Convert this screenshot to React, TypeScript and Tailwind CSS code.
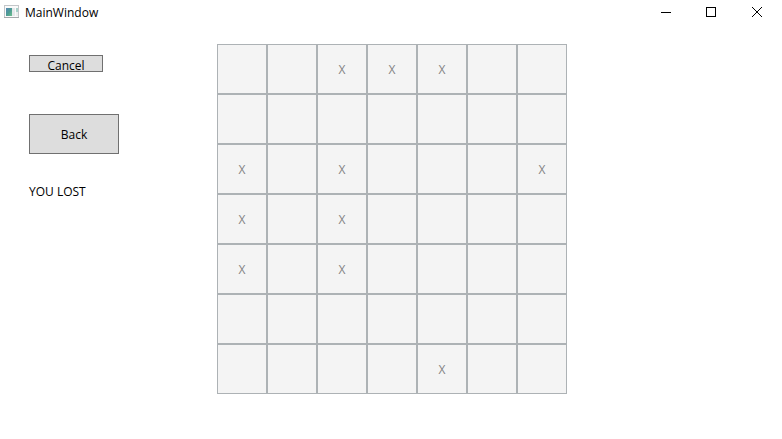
import React from "react";

const SIZE = 7;

const marks = new Set([
  "0-2", "0-3", "0-4",
  "2-0", "2-2", "2-6",
  "3-0", "3-2",
  "4-0", "4-2",
  "6-4",
]);

function AppIcon() {
  return (
    <svg width="16" height="14" viewBox="0 0 16 14" aria-hidden="true" shapeRendering="crispEdges">
      <defs>
        <linearGradient id="pane" x1="0" y1="0" x2="1" y2="1">
          <stop offset="0" stopColor="#5586b4" />
          <stop offset="0.5" stopColor="#4c9a94" />
          <stop offset="1" stopColor="#6fc08c" />
        </linearGradient>
      </defs>
      <rect x="0.5" y="0.5" width="14" height="12" fill="#fafafa" stroke="#c3c6c9" />
      <rect x="0" y="12" width="15" height="1" fill="#a4a7aa" />
      <rect x="2" y="3" width="6" height="8" fill="url(#pane)" />
      <rect x="8" y="3" width="3" height="8" fill="#e4e8ea" />
      <rect x="12" y="3" width="2" height="4" fill="#a9d2cb" />
      <rect x="12" y="7" width="2" height="4" fill="#eceeee" />
    </svg>
  );
}

function CaptionButton({ label, children }: { label: string; children: React.ReactNode }) {
  return (
    <button type="button" aria-label={label} className="flex h-6 w-[46px] items-center justify-center">
      <svg width="12" height="12" viewBox="0 0 12 12" fill="none" stroke="#000" aria-hidden="true">
        {children}
      </svg>
    </button>
  );
}

function TitleBar() {
  return (
    <header className="flex h-6 items-center justify-between pr-0.5 pl-1">
      <div className="flex items-center gap-[5px]">
        <AppIcon />
        <h1 className="pt-0.5 text-[12px] leading-4">MainWindow</h1>
      </div>
      <div className="flex">
        <CaptionButton label="Minimize">
          <path d="M2 6.5h10" shapeRendering="crispEdges" />
        </CaptionButton>
        <CaptionButton label="Maximize">
          <path d="M1.5 1.5h9v9h-9z" shapeRendering="crispEdges" />
        </CaptionButton>
        <CaptionButton label="Close">
          <path d="M1 1l10 10M11 1L1 11" />
        </CaptionButton>
      </div>
    </header>
  );
}

function Board() {
  return (
    <div className="grid shrink-0 grid-cols-7">
      {Array.from({ length: SIZE * SIZE }, (_, i) => {
        const row = Math.floor(i / SIZE);
        const col = i % SIZE;
        return (
          <button
            key={i}
            type="button"
            disabled
            aria-label={`Row ${row + 1}, column ${col + 1}`}
            className="size-[50px] border border-[#adb2b5] bg-[#f4f4f4] pt-0.5 text-[12px] leading-4 text-[#838383]"
          >
            {marks.has(`${row}-${col}`) ? "X" : ""}
          </button>
        );
      })}
    </div>
  );
}

export default function App() {
  return (
    <div className="min-h-screen bg-white font-['Open_Sans','Noto_Sans',sans-serif] text-[12px] leading-4 text-black">
      <TitleBar />
      <main className="flex items-start pt-5 pb-8 pl-[29px]">
        <aside className="flex w-[188px] shrink-0 flex-col items-start pt-[11px]">
          <button
            type="button"
            className="flex h-[17px] w-[74px] items-start justify-center border border-[#707070] bg-[#dddddd] pt-0.5"
          >
            Cancel
          </button>
          <button
            type="button"
            className="mt-[42px] h-10 w-[90px] border border-[#707070] bg-[#dddddd] pt-0.5"
          >
            Back
          </button>
          <p className="mt-[30px]">YOU LOST</p>
        </aside>
        <Board />
      </main>
    </div>
  );
}
